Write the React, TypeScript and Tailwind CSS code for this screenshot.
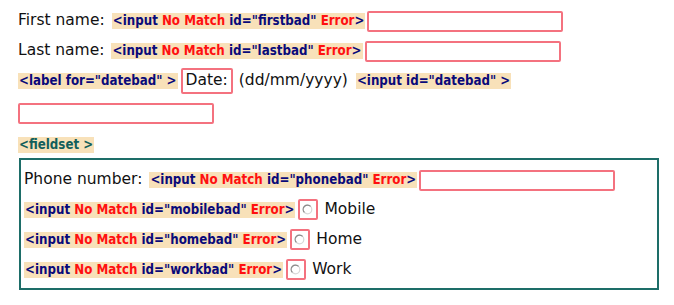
import React from 'react';

const LABEL_FONT = { fontFamily: '"DejaVu Sans", Verdana, sans-serif' };

function Tag({ children, teal = false }: { children: React.ReactNode; teal?: boolean }) {
  return (
    <span
      className={`inline-block whitespace-pre bg-[#f8e1b9] px-px text-[13.2px] leading-[16px] font-bold ${teal ? 'text-[#125e5b]' : 'text-[#0a0a7a]'}`}
      style={{ fontFamily: '"DejaVu Sans Condensed", "DejaVu Sans", sans-serif' }}
    >
      {children}
    </span>
  );
}

function Red({ children }: { children: React.ReactNode }) {
  return <span className="text-[#ff1010]">{children}</span>;
}

function InputTag({ id, bad = true }: { id: string; bad?: boolean }) {
  return (
    <Tag>
      {'<input '}
      {bad && (
        <>
          <Red>No Match</Red>{' '}
        </>
      )}
      {`id="${id}" `}
      {bad ? <Red>Error</Red> : null}
      {'>'}
    </Tag>
  );
}

function TextBox() {
  return <span className="inline-block h-[21px] w-[196px] rounded-[2px] border-2 border-[#f4727f] bg-white" />;
}

function RadioBox() {
  return (
    <span className="inline-flex h-[21px] w-[20px] items-start justify-start rounded-[2px] border-2 border-[#f4727f] bg-white pl-[2px] pt-[3px]">
      <svg width="11" height="11" viewBox="0 0 11 11">
        <circle cx="5.5" cy="5.5" r="4.3" fill="#fff" stroke="#d8d8d8" strokeWidth="1.2" />
        <path d="M2.4 8.4 A4.3 4.3 0 0 1 8.6 2.4" fill="none" stroke="#8a8a8a" strokeWidth="1.2" />
      </svg>
    </span>
  );
}

export default function App() {
  return (
    <div className="h-[305px] w-[674px] overflow-hidden bg-white pl-[18px] text-[15.5px] text-[#111]" style={LABEL_FONT}>
      <div className="mt-[10px] flex h-[22px] items-center">
        <span className="mr-[7px]">First name:</span>
        <InputTag id="firstbad" />
        <span className="ml-[2px] inline-flex"><TextBox /></span>
      </div>

      <div className="mt-[8px] flex h-[22px] items-center">
        <span className="mr-[7px]">Last name:</span>
        <InputTag id="lastbad" />
        <span className="ml-[2px] inline-flex"><TextBox /></span>
      </div>

      <div className="mt-[6px] flex h-[26px] items-center">
        <Tag>{'<label for="datebad" >'}</Tag>
        <span className="ml-[3px] inline-flex h-[26px] items-center rounded-[2px] border-2 border-[#f4727f] px-[3px]">Date:</span>
        <span className="ml-[6px] mr-[8px]">(dd/mm/yyyy)</span>
        <InputTag id="datebad" bad={false} />
      </div>

      <div className="mt-[9px] flex h-[21px] items-center">
        <TextBox />
      </div>

      <div className="mt-[13px] flex h-[16px] items-center">
        <Tag teal>{'<fieldset >'}</Tag>
      </div>

      <div className="mt-[5px] mr-[15px] ml-[1px] h-[132px] border-2 border-[#1d6d68] pl-[3px] pt-[9px]">
        <div className="flex h-[22px] items-center">
          <span className="mr-[7px]">Phone number:</span>
          <InputTag id="phonebad" />
          <span className="ml-[2px] inline-flex"><TextBox /></span>
        </div>
        <div className="mt-[8px] flex h-[21px] items-center">
          <InputTag id="mobilebad" />
          <span className="ml-[3px] inline-flex"><RadioBox /></span>
          <span className="ml-[6px]">Mobile</span>
        </div>
        <div className="mt-[9px] flex h-[21px] items-center">
          <InputTag id="homebad" />
          <span className="ml-[3px] inline-flex"><RadioBox /></span>
          <span className="ml-[6px]">Home</span>
        </div>
        <div className="mt-[9px] flex h-[21px] items-center">
          <InputTag id="workbad" />
          <span className="ml-[3px] inline-flex"><RadioBox /></span>
          <span className="ml-[6px]">Work</span>
        </div>
      </div>
    </div>
  );
}
